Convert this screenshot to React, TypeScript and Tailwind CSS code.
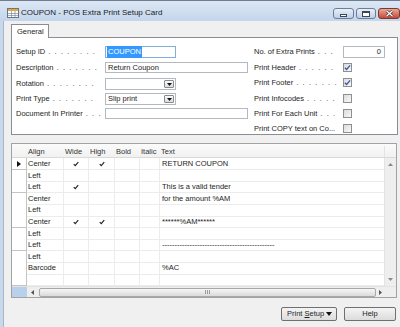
import React from "react";

function Label({ text, dots }: { text: string; dots: number }) {
  return (
    <div className="flex w-[89px] shrink-0 whitespace-nowrap text-[#1e1e1e]">
      <span>{text}</span>
      {dots > 0 && (
        <span className="pl-[3px] tracking-[1.1px] text-[#333]">{Array(dots).fill(".").join(" ")}</span>
      )}
    </div>
  );
}

function Check({ size = 7, color = "#222" }: { size?: number; color?: string }) {
  return (
    <svg width={size} height={size} viewBox="0 0 8 8">
      <path d="M1 4.2 L3 6.3 L7 1.5" fill="none" stroke={color} strokeWidth="1.5" />
    </svg>
  );
}

function CheckBox({ checked }: { checked?: boolean }) {
  return (
    <div className="flex h-[9px] w-[9px] items-center justify-center border border-[#8e8f8f] bg-gradient-to-br from-[#dcdcdc] to-[#f8f8f8]">
      {checked && <Check size={7} color="#3c5aa0" />}
    </div>
  );
}

function DropBtn() {
  return (
    <div className="mr-[1px] flex h-[8px] w-[10px] items-center justify-center rounded-[1px] border border-[#8a8a8a] bg-gradient-to-b from-[#fafafa] to-[#dcdcdc]">
      <svg width="5" height="3" viewBox="0 0 5 3">
        <path d="M0 0 H5 L2.5 3 Z" fill="#111" />
      </svg>
    </div>
  );
}

const rows = [
  { align: "Center", wide: true, high: true, text: "RETURN COUPON", cur: true },
  { align: "Left" },
  { align: "Left", wide: true, text: "This is a valid tender" },
  { align: "Center", text: "for the amount %AM" },
  { align: "Left" },
  { align: "Center", wide: true, high: true, text: "******%AM******" },
  { align: "Left" },
  { align: "Left", text: "---------------------------------------------" },
  { align: "Left" },
  { align: "Barcode", text: "%AC" },
  { align: "" },
];

const cols = "grid grid-cols-[15px_37px_25px_26px_25px_20px_1fr]";

export default function App() {
  return (
    <div className="flex h-[327px] w-[400px] flex-col overflow-hidden bg-[#f0f0f0] font-['Liberation_Sans',Arial,sans-serif] text-[7.5px] text-[#1e1e1e]">
      {/* title bar */}
      <div className="flex h-[21px] shrink-0 items-start border-t border-[#6f7c8c] bg-gradient-to-b from-[#dce7f5] to-[#c3d6ec]">
        <svg className="ml-[7px] mt-[7px]" width="12" height="10" viewBox="0 0 12 10">
          <rect x="0.5" y="0.5" width="11" height="9" fill="#fff" stroke="#6c7480" />
          <rect x="1" y="1" width="10" height="2" fill="#e2a93a" />
          <path d="M1 5.5 H11 M1 7.5 H11 M4.5 3 V9.5 M8 3 V9.5" stroke="#7a8aa0" strokeWidth="0.7" />
        </svg>
        <span className="ml-[2px] mt-[6px] text-[8px] text-[#1b1b1b]">COUPON - POS Extra Print Setup Card</span>
        <div className="ml-auto mt-[7px] flex gap-[2px]">
          <div className="flex h-[11px] w-[21px] items-center justify-center rounded-[3px] border border-[#6e7d92] bg-gradient-to-b from-[#e8eff8] to-[#bccfe8]">
            <div className="mt-[3px] h-[3px] w-[7px] border border-[#3c4656] bg-white" />
          </div>
          <div className="flex h-[11px] w-[20px] items-center justify-center rounded-[3px] border border-[#6e7d92] bg-gradient-to-b from-[#e8eff8] to-[#bccfe8]">
            <div className="h-[6px] w-[8px] border border-t-2 border-[#3c4656] bg-white" />
          </div>
          <div className="flex h-[11px] w-[22px] items-center justify-center rounded-[3px] border border-[#7a3a32] bg-gradient-to-b from-[#eaa796] to-[#c4473a]">
            <svg width="9" height="7" viewBox="0 0 9 7">
              <path d="M1.5 0.8 L7.5 6.2 M7.5 0.8 L1.5 6.2" stroke="#4a2a26" strokeWidth="2.6" />
              <path d="M1.5 0.8 L7.5 6.2 M7.5 0.8 L1.5 6.2" stroke="#fff" strokeWidth="1.3" />
            </svg>
          </div>
        </div>
      </div>

      <div className="flex flex-1">
        {/* left frame */}
        <div className="w-[4px] border-r border-[#a7b5c7] bg-[#c9d9ec]" />

        <div className="flex flex-1 flex-col pl-[7px] pr-[2px] pt-[3px]">
          {/* tab */}
          <div className="flex h-[13px]">
            <div className="relative z-10 -mb-px flex w-[38px] items-center border border-b-0 border-[#8a8d94] bg-white pl-[5px] pt-[1px]">
              General
            </div>
          </div>

          {/* tab panel */}
          <div className="flex h-[98px] border border-[#8a8d94] bg-white pl-[4px] pt-[8px]">
            <div className="flex w-[238px] flex-col">
              <div className="flex h-[12px] items-center">
                <Label text="Setup ID" dots={8} />
                <div className="flex h-[12px] w-[71px] items-center border border-[#83aedc] bg-white pl-[1px]">
                  <span className="bg-[#3399ff] px-[1px] text-white">COUPON</span>
                </div>
              </div>
              <div className="mt-[4px] flex h-[11px] items-center">
                <Label text="Description" dots={7} />
                <div className="flex h-[11px] w-[143px] items-center border border-[#b4b8bf] bg-white pl-[2px]">
                  Return Coupon
                </div>
              </div>
              <div className="mt-[5px] flex h-[12px] items-center">
                <Label text="Rotation" dots={8} />
                <div className="flex h-[12px] w-[71px] items-center justify-end border border-[#b4b8bf] bg-white">
                  <DropBtn />
                </div>
              </div>
              <div className="mt-[3px] flex h-[12px] items-center">
                <Label text="Print Type" dots={7} />
                <div className="flex h-[12px] w-[71px] items-center border border-[#b4b8bf] bg-white pl-[2px]">
                  <span className="flex-1">Slip print</span>
                  <DropBtn />
                </div>
              </div>
              <div className="mt-[3px] flex h-[11px] items-center">
                <Label text="Document In Printer" dots={3} />
                <div className="h-[11px] w-[143px] border border-[#b4b8bf] bg-white" />
              </div>
            </div>

            <div className="flex flex-col">
              <div className="flex h-[12px] items-center">
                <Label text="No. of Extra Prints" dots={3} />
                <div className="flex h-[12px] w-[42px] items-center justify-end border border-[#b4b8bf] bg-white pr-[3px]">
                  0
                </div>
              </div>
              {(
                [
                  ["Print Header", 6, true],
                  ["Print Footer", 7, true],
                  ["Print Infocodes", 5, false],
                  ["Print For Each Unit", 3, false],
                  ["Print COPY text on Co...", 0, false],
                ] as [string, number, boolean][]
              ).map(([t, d, c]) => (
                <div key={t} className="mt-[4px] flex h-[12px] items-center">
                  <Label text={t} dots={d} />
                  <CheckBox checked={c} />
                </div>
              ))}
            </div>
          </div>

          {/* grid */}
          <div className="mt-[8px] flex h-[155px] w-[386px] flex-col border border-[#a3a3a3] bg-white">
            <div className="flex h-[14px] border-b border-[#dadada] bg-gradient-to-b from-[#fbfbfb] to-[#f1f1f1] pt-[2px] text-[#333]">
              <div className={`${cols} flex-1 items-center`}>
                <div />
                <div className="pl-[1px]">Align</div>
                <div className="pl-[1px]">Wide</div>
                <div className="pl-[1px]">High</div>
                <div className="pl-[1px]">Bold</div>
                <div className="pl-[1px]">Italic</div>
                <div className="pl-[1px]">Text</div>
              </div>
              <div className="w-[12px] border-l border-[#e3e3e3]" />
            </div>
            <div className="flex flex-1">
              <div className="flex flex-1 flex-col">
                {rows.map((r, i) => (
                  <div key={i} className={`${cols} h-[11.6px] items-stretch`}>
                    <div className="flex items-center justify-center border-b border-r border-[#c4c4c4] bg-white">
                      {r.cur && (
                        <svg width="4" height="6" viewBox="0 0 4 6">
                          <path d="M0 0 L4 3 L0 6 Z" fill="#111" />
                        </svg>
                      )}
                    </div>
                    <div className="flex items-center border-b border-r border-[#ececec] pl-[1px]">{r.align}</div>
                    <div className="flex items-center justify-center border-b border-r border-[#ececec]">
                      {r.wide && <Check size={6} />}
                    </div>
                    <div className="flex items-center justify-center border-b border-r border-[#ececec]">
                      {r.high && <Check size={6} />}
                    </div>
                    <div className="border-b border-r border-[#ececec]" />
                    <div className="border-b border-r border-[#ececec]" />
                    <div className="flex items-center overflow-hidden whitespace-nowrap border-b border-[#ececec] pl-[2px]">
                      {r.text}
                    </div>
                  </div>
                ))}
              </div>
              {/* vertical scrollbar */}
              <div className="flex w-[12px] flex-col items-center justify-between border-l border-[#e3e3e3] bg-[#eeeeee] py-[5px]">
                <svg width="5" height="3" viewBox="0 0 5 3">
                  <path d="M0 3 L2.5 0 L5 3 Z" fill="#8a8a8a" />
                </svg>
                <svg width="5" height="3" viewBox="0 0 5 3">
                  <path d="M0 0 H5 L2.5 3 Z" fill="#8a8a8a" />
                </svg>
              </div>
            </div>
            {/* horizontal scrollbar */}
            <div className="flex h-[11px] border-t border-[#e3e3e3]">
              <div className="w-[15px] bg-[#b8d0ec]" />
              <div className="flex flex-1 items-center bg-[#eeeeee]">
                <svg className="ml-[4px] mr-[5px]" width="3" height="5" viewBox="0 0 3 5">
                  <path d="M3 0 V5 L0 2.5 Z" fill="#555" />
                </svg>
                <div className="flex h-[9px] flex-1 items-center justify-center rounded-[2px] border border-[#a8a8a8] bg-gradient-to-b from-[#f6f6f6] to-[#dadada]">
                  <svg width="6" height="4" viewBox="0 0 6 4">
                    <path d="M0.5 0 V4 M2.5 0 V4 M4.5 0 V4" stroke="#888" strokeWidth="0.8" />
                  </svg>
                </div>
                <svg className="ml-[3px] mr-[2px]" width="3" height="5" viewBox="0 0 3 5">
                  <path d="M0 0 V5 L3 2.5 Z" fill="#555" />
                </svg>
              </div>
              <div className="w-[12px] bg-[#eeeeee]" />
            </div>
          </div>

          {/* buttons */}
          <div className="mt-[9px] flex justify-end gap-[7px] pr-[2px]">
            <div className="flex h-[14px] w-[56px] items-center justify-between rounded-[2px] border border-[#707070] bg-gradient-to-b from-[#f4f4f4] to-[#dcdcdc] pl-[5px] pr-[4px]">
              <span>
                Print <span className="underline">S</span>etup
              </span>
              <svg width="6" height="4" viewBox="0 0 6 4">
                <path d="M0 0 H6 L3 4 Z" fill="#111" />
              </svg>
            </div>
            <div className="flex h-[14px] w-[52px] items-center justify-center rounded-[2px] border border-[#707070] bg-gradient-to-b from-[#f4f4f4] to-[#dcdcdc]">
              Help
            </div>
          </div>
        </div>
      </div>
    </div>
  );
}
